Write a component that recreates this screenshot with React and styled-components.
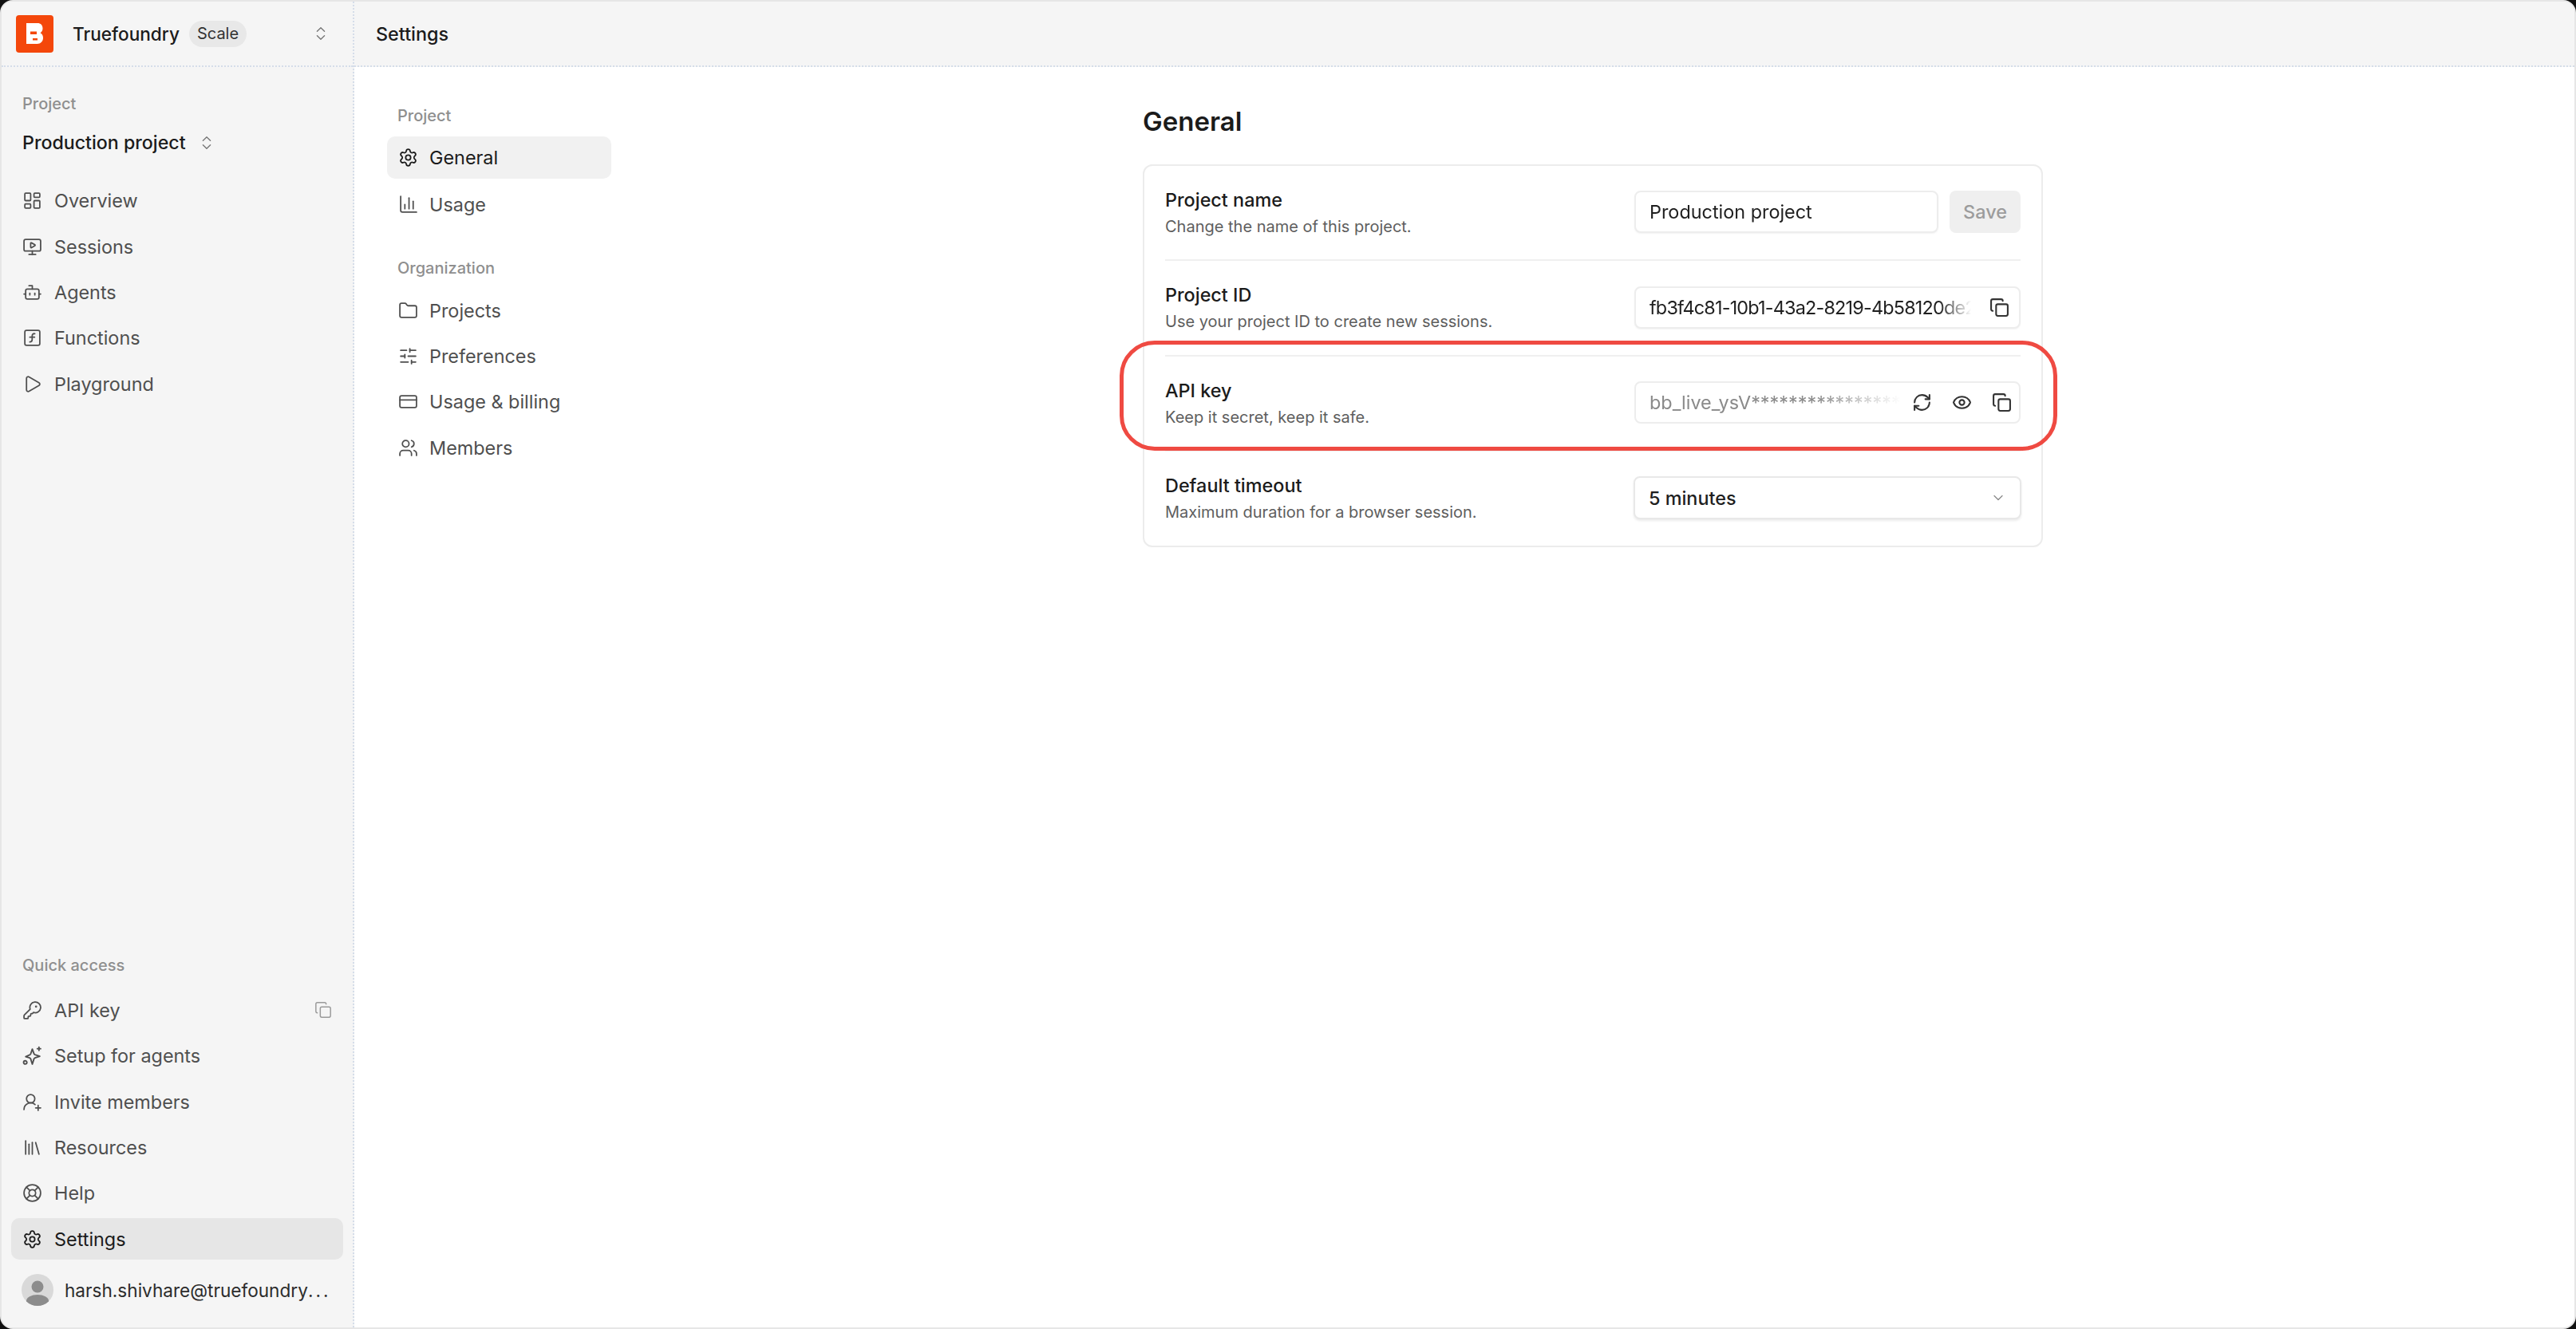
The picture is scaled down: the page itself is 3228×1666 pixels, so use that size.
import React from "react";
import styled, { createGlobalStyle } from "styled-components";
import {
  LayoutDashboard, MonitorPlay, Bot, SquareFunction, Play, Settings, ChevronsUpDown, ChevronDown,
  Folder, SlidersHorizontal, CreditCard, Users, KeyRound, UserRoundPlus, Library, LifeBuoy, Copy, RefreshCw, Eye,
} from "lucide-react";

const Global = createGlobalStyle`
  html, body { margin: 0; padding: 0; background: #111; }
  body { font-family: Inter, "Noto Sans", sans-serif; -webkit-font-smoothing: antialiased; }
  * { box-sizing: border-box; }
`;

const Frame = styled.div`
  width: 3228px; height: 1666px; display: flex; overflow: hidden;
  background: #fff; border: 2px solid #e6e6e6; border-radius: 16px;
`;
const Sidebar = styled.aside`
  width: 442px; flex: none; display: flex; flex-direction: column;
  background: #f5f5f5; border-right: 2px dotted #d5dde9;
`;
const Brand = styled.div`
  height: 82px; flex: none; display: flex; align-items: center; padding: 0 29px 0 18px;
  border-bottom: 2px dotted #d5dde9;
`;
const Logo = styled.div`
  width: 47px; height: 47px; border-radius: 4px; background: #f4470b; flex: none;
  display: flex; align-items: center; justify-content: center; margin-right: 24px;
`;
const BrandName = styled.span`font-size: 22.6px; font-weight: 500; color: #1b1b1b;`;
const Plan = styled.span`
  margin-left: 12px; height: 33px; padding: 0 10px; border-radius: 17px; background: #e8e8e8;
  font-size: 20px; color: #333; display: flex; align-items: center;
`;
const Grow = styled.div`flex: 1;`;
const SideSection = styled.div`
  padding: ${p => p.$pad}; display: flex; flex-direction: column;
`;
const SideLabel = styled.div`
  font-size: 20px; font-weight: 500; color: #8f8f8f; padding-left: 14px; line-height: 28px;
  margin-bottom: ${p => p.$after || 0}px;
`;
const ProjectPick = styled.div`
  display: flex; align-items: center; gap: 15px; height: 48px; margin: 11px 0 20px 14px;
  font-size: 23.2px; font-weight: 450; color: #1b1b1b;
`;
const NavRow = styled.div`
  height: ${p => p.$h || 57.4}px; display: flex; align-items: center; gap: ${p => p.$gap || 15}px; padding: 0 14px;
  margin-top: ${p => p.$top || 0}px; margin-bottom: ${p => p.$bottom || 0}px;
  font-size: 23.4px; color: ${p => (p.$active ? "#1b1b1b" : "#4f4f4f")};
  background: ${p => (p.$active ? p.$tone : "transparent")};
  border-radius: 10px;
  & > svg:first-child { flex: none; }
`;
const TrailIcon = styled.span`margin-left: auto; display: flex; color: #9a9a9a;`;
const UserRow = styled.div`
  display: flex; align-items: center; gap: 14px; padding: 18px 0 0 13px;
  font-size: 22.6px; color: #2c2c2c;
`;
const UserName = styled.span`white-space: nowrap;`;
const Dots = styled.span`letter-spacing: 3px;`;
const Avatar = styled.div`width: 40px; height: 40px; border-radius: 50%; background: #d9d9d9; overflow: hidden; flex: none;`;

const Main = styled.main`flex: 1; min-width: 0; display: flex; flex-direction: column;`;
const TopBar = styled.header`
  height: 82px; flex: none; background: #f5f5f5; border-bottom: 2px dotted #d5dde9;
  display: flex; align-items: center; padding: 0 27px; font-size: 23.4px; font-weight: 500; color: #1b1b1b;
`;
const Body = styled.div`flex: 1; display: flex; min-height: 0;`;
const SubNav = styled.nav`width: 322px; flex: none; padding: 45px 0 0 41px; display: flex; flex-direction: column;`;
const SubLabel = styled.div`
  font-size: 20px; font-weight: 500; color: #8f8f8f; padding-left: 13px; line-height: 32px;
  margin-top: ${p => p.$top || 0}px; margin-bottom: ${p => p.$after}px;
`;
const Page = styled.section`flex: 1; padding: 46px 0 0 666px;`;
const Title = styled.h1`margin: 0 0 32px; font-size: 33px; line-height: 44px; font-weight: 600; color: #1b1b1b;`;
const Card = styled.div`
  width: 1128px; border: 2px solid #ececec; border-radius: 12px; padding: 0 26px; display: flex; flex-direction: column;
`;
const Row = styled.div`
  position: relative; height: ${p => p.$h}px; display: flex; align-items: center; justify-content: space-between;
  padding-bottom: 2px;
  border-bottom: ${p => (p.$last ? "none" : "2px solid #efefef")};
`;
const Highlight = styled.div`
  position: absolute; top: -20px; bottom: -1px; left: -57px; right: -46px;
  border: 5px solid #ef4a42; border-radius: 44px; pointer-events: none;
`;
const Info = styled.div`display: flex; flex-direction: column; padding-top: 1px;`;
const Name = styled.div`font-size: 23.4px; line-height: 34px; font-weight: 450; color: #1b1b1b;`;
const Desc = styled.div`font-size: 20px; line-height: 30px; margin-top: 1px; color: #5e5e5e;`;
const Controls = styled.div`display: flex; gap: 14px; width: 484px;`;
const Field = styled.div`
  height: 53px; flex: 1; min-width: 0; display: flex; align-items: center; padding: 0 0 0 17px;
  border: 2px solid #ededed; border-radius: 8px; font-size: 23.4px;
  background: #fff; color: ${p => (p.$muted ? "#8a8a8a" : "#1f1f1f")};
  box-shadow: 0 1px 2px rgba(0,0,0,${p => (p.$muted ? 0 : 0.05)});
`;
const FieldText = styled.span`
  flex: 1; min-width: 0; white-space: nowrap; letter-spacing: ${p => p.$track || 0}px;
  mask-image: linear-gradient(90deg, #000 ${p => p.$solid}%, transparent 100%);
`;
const FieldIcons = styled.span`
  display: flex; align-items: center; gap: 25px; padding: 0 ${p => p.$r}px 0 ${p => p.$l}px; color: #333;
`;
const SaveButton = styled.button`
  width: 89px; height: 53px; border: 0; border-radius: 8px; background: #efefef; color: #9c9c9c;
  font: 500 23.4px Inter, sans-serif; padding: 0;
`;
const SelectBox = styled.div`
  height: 54px; width: 486px; margin: 0 -1px; flex: none; display: flex; align-items: center; justify-content: space-between; padding: 0 17px;
  border: 2px solid #e8e8e8; border-radius: 8px; background: #fff; font-size: 23.4px; font-weight: 450; color: #1f1f1f;
  box-shadow: 0 2px 3px rgba(0,0,0,.08);
`;

const Ico = { strokeWidth: 1.7 };
const SetupIcon = () => (
  <svg width="25" height="25" viewBox="0 0 24 24" fill="none" stroke="currentColor" strokeWidth="1.8" strokeLinecap="round" strokeLinejoin="round">
    <path d="M12 4l2 5.500a2 2 0 0 0 1.200 1.200L21 12.500l-5.800 2a2 2 0 0 0-1.200 1.200L12 22l-2-6.300a2 2 0 0 0-1.200-1.200L4 13l4.800-2a2 2 0 0 0 1.200-1.200z" />
    <path d="M20 1.500v4M18 3.500h4" />
    <circle cx="3.500" cy="20" r="2" />
  </svg>
);
const UsageIcon = () => (
  <svg width="25" height="25" viewBox="0 0 24 24" fill="none" stroke="currentColor" strokeWidth="1.7" strokeLinecap="round" strokeLinejoin="round">
    <path d="M3 2v17a2 2 0 0 0 2 2h17" /><path d="M8 17v-5" /><path d="M13 17V4" /><path d="M18 17V8" />
  </svg>
);
const LogoMark = () => (
  <svg width="21" height="26" viewBox="0 0 21 26">
    <path fill="#fff" d="M0 0h14c4 0 6.500 2.700 6.500 6.500 0 2.700-1.300 4.700-3 5.800 2 1 3.500 3.200 3.500 6.200 0 4.300-3 7.500-7.500 7.500H0z" />
    <path fill="#f4470b" d="M5 10.500h8v3.500H5zM8 19h6v2.500H8z" />
  </svg>
);
const AvatarArt = () => (
  <svg width="40" height="40" viewBox="0 0 40 40">
    <circle cx="20" cy="16" r="7.500" fill="#8c8c8c" />
    <ellipse cx="20" cy="34" rx="14" ry="8" fill="#8c8c8c" />
  </svg>
);

const I = (C, size = 25) => <C size={size} {...Ico} />;

export default function App() {
  return (
    <>
      <Global />
      <Frame>
        <Sidebar>
          <Brand>
            <Logo><LogoMark /></Logo>
            <BrandName>Truefoundry</BrandName>
            <Plan>Scale</Plan>
            <Grow />
            <ChevronsUpDown size={22} strokeWidth={1.5} color="#777" />
          </Brand>
          <SideSection $pad="32px 12px 0">
            <SideLabel>Project</SideLabel>
            <ProjectPick>Production project <ChevronsUpDown size={22} strokeWidth={1.5} color="#777" /></ProjectPick>
            <NavRow>{I(LayoutDashboard)}Overview</NavRow>
            <NavRow>{I(MonitorPlay)}Sessions</NavRow>
            <NavRow>{I(Bot)}Agents</NavRow>
            <NavRow>{I(SquareFunction)}Functions</NavRow>
            <NavRow>{I(Play)}Playground</NavRow>
          </SideSection>
          <Grow />
          <SideSection $pad="0 12px 27px">
            <SideLabel $after={14}>Quick access</SideLabel>
            <NavRow>{I(KeyRound)}API key<TrailIcon><Copy size={22} strokeWidth={1.6} /></TrailIcon></NavRow>
            <NavRow><SetupIcon />Setup for agents</NavRow>
            <NavRow>{I(UserRoundPlus)}Invite members</NavRow>
            <NavRow>{I(Library)}Resources</NavRow>
            <NavRow>{I(LifeBuoy)}Help</NavRow>
            <NavRow $active $tone="#e6e6e6" $h={52} $top={2.4}>{I(Settings)}Settings</NavRow>
            <UserRow>
              <Avatar><AvatarArt /></Avatar>
              <UserName>harsh.shivhare@truefoundry<Dots>...</Dots></UserName>
            </UserRow>
          </SideSection>
        </Sidebar>
        <Main>
          <TopBar>Settings</TopBar>
          <Body>
            <SubNav>
              <SubLabel $after={10}>Project</SubLabel>
              <NavRow $active $tone="#f1f1f1" $h={53} $gap={14} $bottom={4}>{I(Settings)}General</NavRow>
              <NavRow $gap={14}><UsageIcon />Usage</NavRow>
              <SubLabel $top={35} $after={8}>Organization</SubLabel>
              <NavRow $gap={14}>{I(Folder)}Projects</NavRow>
              <NavRow $gap={14}>{I(SlidersHorizontal)}Preferences</NavRow>
              <NavRow $gap={14}>{I(CreditCard)}Usage &amp; billing</NavRow>
              <NavRow $gap={14}>{I(Users)}Members</NavRow>
            </SubNav>
            <Page>
              <Title>General</Title>
              <Card>
                <Row $h={119}>
                  <Info><Name>Project name</Name><Desc>Change the name of this project.</Desc></Info>
                  <Controls>
                    <Field><FieldText $solid={100}>Production project</FieldText></Field>
                    <SaveButton>Save</SaveButton>
                  </Controls>
                </Row>
                <Row $h={120}>
                  <Info><Name>Project ID</Name><Desc>Use your project ID to create new sessions.</Desc></Info>
                  <Controls>
                    <Field>
                      <FieldText $solid={90} $track={-0.8}>fb3f4c81-10b1-43a2-8219-4b58120de2</FieldText>
                      <FieldIcons $l={23} $r={12}><Copy size={25} strokeWidth={2} /></FieldIcons>
                    </Field>
                  </Controls>
                </Row>
                <Row $h={119}>
                  <Highlight />
                  <Info><Name>API key</Name><Desc>Keep it secret, keep it safe.</Desc></Info>
                  <Controls>
                    <Field $muted>
                      <FieldText $solid={66}>bb_live_ysV*******************</FieldText>
                      <FieldIcons $l={14} $r={9}><RefreshCw size={25} strokeWidth={2} /><Eye size={25} strokeWidth={2} /><Copy size={25} strokeWidth={2} /></FieldIcons>
                    </Field>
                  </Controls>
                </Row>
                <Row $h={118} $last>
                  <Info><Name>Default timeout</Name><Desc>Maximum duration for a browser session.</Desc></Info>
                  <Controls>
                    <SelectBox>5 minutes<ChevronDown size={20} strokeWidth={1.5} color="#8a8a8a" /></SelectBox>
                  </Controls>
                </Row>
              </Card>
            </Page>
          </Body>
        </Main>
      </Frame>
    </>
  );
}
